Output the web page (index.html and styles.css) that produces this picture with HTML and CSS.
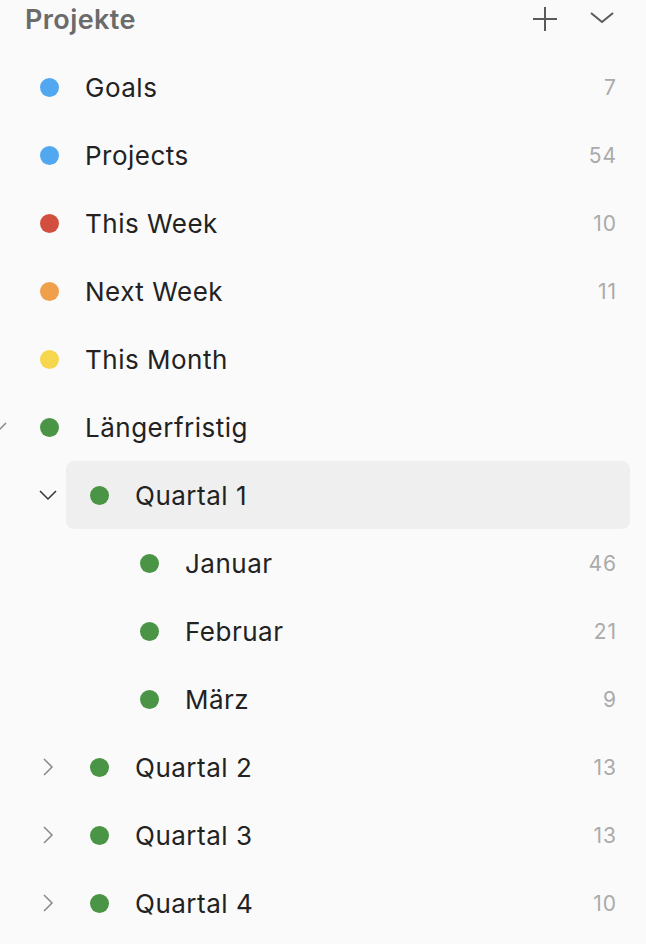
FILE: index.html
```html
<!DOCTYPE html>
<html lang="de">
<head>
<meta charset="utf-8">
<link rel="stylesheet" href="styles.css">
</head>
<body>
<div class="sidebar">
  <div class="header">
    <span class="title">Projekte</span>
    <div class="actions">
      <svg class="icon" width="26" height="26" viewBox="0 0 26 26"><path d="M13 1v24M1 13h24" stroke="#5a5a5a" stroke-width="2" fill="none"/></svg>
      <svg class="icon" width="26" height="26" viewBox="0 0 26 26"><path d="M2 7l11 9 11-9" stroke="#5a5a5a" stroke-width="2" fill="none"/></svg>
    </div>
  </div>
  <ul class="list">
    <li class="row l0"><span class="tog"></span><div class="item"><span class="dot blue"></span><span class="name">Goals</span><span class="count">7</span></div></li>
    <li class="row l0"><span class="tog"></span><div class="item"><span class="dot blue"></span><span class="name">Projects</span><span class="count">54</span></div></li>
    <li class="row l0"><span class="tog"></span><div class="item"><span class="dot red"></span><span class="name">This Week</span><span class="count">10</span></div></li>
    <li class="row l0"><span class="tog"></span><div class="item"><span class="dot orange"></span><span class="name">Next Week</span><span class="count">11</span></div></li>
    <li class="row l0"><span class="tog"></span><div class="item"><span class="dot yellow"></span><span class="name">This Month</span><span class="count"></span></div></li>
    <li class="row l0"><span class="tog"><svg width="20" height="20" viewBox="0 0 20 20"><path d="M2 6l8 8 8-8" stroke="#888" stroke-width="1.5" fill="none"/></svg></span><div class="item"><span class="dot green"></span><span class="name">Längerfristig</span><span class="count"></span></div></li>
    <li class="row l1 active"><span class="tog"><svg width="20" height="20" viewBox="0 0 20 20"><path d="M2 6l8 8 8-8" stroke="#333" stroke-width="1.5" fill="none"/></svg></span><div class="item"><span class="dot green"></span><span class="name">Quartal 1</span><span class="count"></span></div></li>
    <li class="row l2"><span class="tog"></span><div class="item"><span class="dot green"></span><span class="name">Januar</span><span class="count">46</span></div></li>
    <li class="row l2"><span class="tog"></span><div class="item"><span class="dot green"></span><span class="name">Februar</span><span class="count">21</span></div></li>
    <li class="row l2"><span class="tog"></span><div class="item"><span class="dot green"></span><span class="name">März</span><span class="count">9</span></div></li>
    <li class="row l1"><span class="tog"><svg width="20" height="20" viewBox="0 0 20 20"><path d="M6 2l8 8-8 8" stroke="#888" stroke-width="1.5" fill="none"/></svg></span><div class="item"><span class="dot green"></span><span class="name">Quartal 2</span><span class="count">13</span></div></li>
    <li class="row l1"><span class="tog"><svg width="20" height="20" viewBox="0 0 20 20"><path d="M6 2l8 8-8 8" stroke="#888" stroke-width="1.5" fill="none"/></svg></span><div class="item"><span class="dot green"></span><span class="name">Quartal 3</span><span class="count">13</span></div></li>
    <li class="row l1"><span class="tog"><svg width="20" height="20" viewBox="0 0 20 20"><path d="M6 2l8 8-8 8" stroke="#888" stroke-width="1.5" fill="none"/></svg></span><div class="item"><span class="dot green"></span><span class="name">Quartal 4</span><span class="count">10</span></div></li>
  </ul>
</div>
</body>
</html>
```
FILE: styles.css
```css
html, body {
  margin: 0;
  padding: 0;
  background: #fafafa;
  font-family: Inter, "Noto Sans", sans-serif;
  overflow: hidden;
}
.sidebar {
  width: 646px;
  height: 944px;
  overflow: hidden;
}
.header {
  display: flex;
  align-items: center;
  justify-content: space-between;
  height: 38px;
  padding: 0 31px 0 25px;
}
.title {
  font-size: 27px;
  font-weight: 600;
  letter-spacing: 0.4px;
  color: #6b6b6b;
}
.actions {
  display: flex;
  gap: 31px;
  align-items: center;
}
.icon { display: block; }
.list {
  list-style: none;
  margin: 15px 0 0;
  padding: 0;
}
.row {
  display: flex;
  align-items: stretch;
  height: 68px;
  margin-right: 16px;
}
.l0 { margin-left: -20px; }
.l1 { margin-left: 30px; }
.l2 { margin-left: 80px; }
.tog {
  flex: none;
  width: 60px;
  display: flex;
  align-items: center;
  padding-left: 8px;
  box-sizing: border-box;
}
.tog svg { display: block; }
.item {
  flex: 1;
  display: flex;
  align-items: center;
  margin-left: -24px;
  padding-left: 24px;
  padding-right: 13px;
  border-radius: 8px;
}
.active .item { background: #efefef; }
.dot {
  flex: none;
  width: 19px;
  height: 19px;
  border-radius: 50%;
  margin-right: 26px;
}
.blue { background: #52a8f0; }
.red { background: #d24f3f; }
.orange { background: #f0a04b; }
.yellow { background: #f5d64c; }
.green { background: #4a9445; }
.name {
  flex: 1;
  font-size: 26px;
  letter-spacing: 0.5px;
  color: #222;
}
.count {
  font-size: 21px;
  letter-spacing: 1px;
  color: #aaa;
}
```
